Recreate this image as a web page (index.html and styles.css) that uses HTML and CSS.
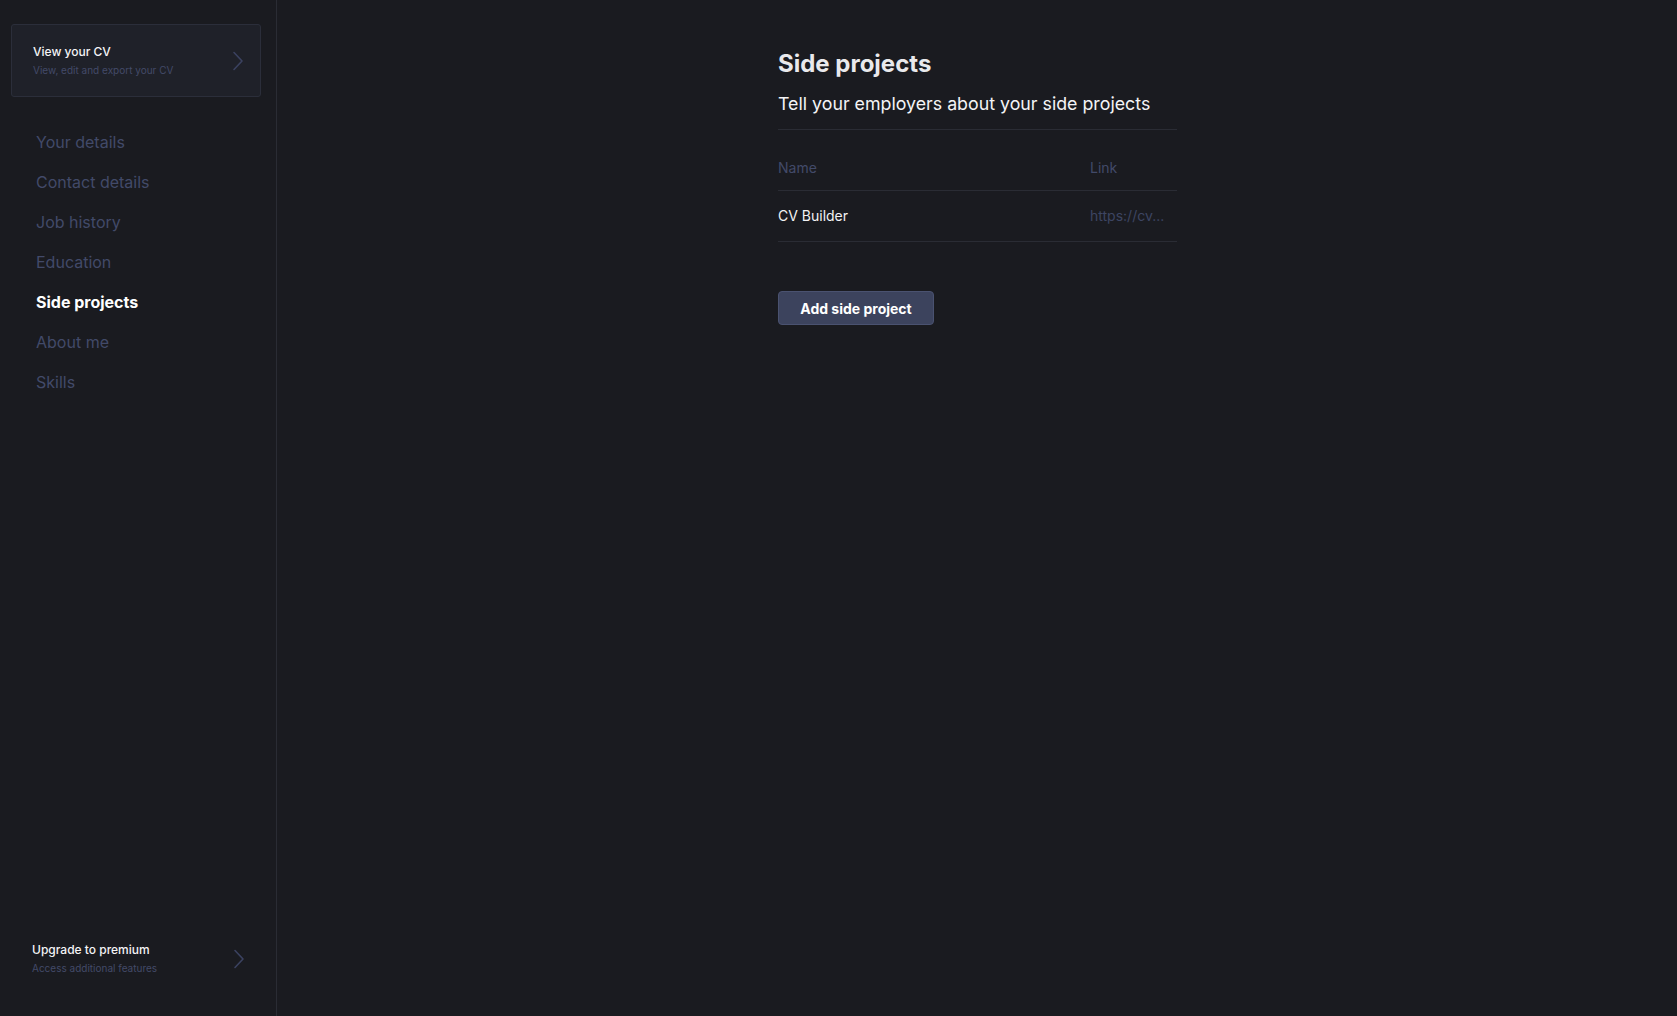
FILE: index.html
```html
<!DOCTYPE html>
<html lang="en">
<head>
<meta charset="utf-8">
<title>Side projects</title>
<link rel="stylesheet" href="styles.css">
</head>
<body>
<div class="app">
  <aside class="sidebar">
    <a class="cv-card" href="#">
      <div class="cv-text">
        <div class="cv-title">View your CV</div>
        <div class="cv-sub">View, edit and export your CV</div>
      </div>
      <svg class="chev" width="12" height="20" viewBox="0 0 12 20"><polyline points="2,1.5 10,10 2,18.5" fill="none" stroke="currentColor" stroke-width="1.6" stroke-linecap="round" stroke-linejoin="round"/></svg>
    </a>
    <nav class="nav">
      <a class="nav-item" href="#">Your details</a>
      <a class="nav-item" href="#">Contact details</a>
      <a class="nav-item" href="#">Job history</a>
      <a class="nav-item" href="#">Education</a>
      <a class="nav-item active" href="#">Side projects</a>
      <a class="nav-item" href="#">About me</a>
      <a class="nav-item" href="#">Skills</a>
    </nav>
    <a class="upgrade" href="#">
      <div class="cv-text">
        <div class="cv-title">Upgrade to premium</div>
        <div class="cv-sub">Access additional features</div>
      </div>
      <svg class="chev" width="12" height="20" viewBox="0 0 12 20"><polyline points="2,1.5 10,10 2,18.5" fill="none" stroke="currentColor" stroke-width="1.6" stroke-linecap="round" stroke-linejoin="round"/></svg>
    </a>
  </aside>
  <main class="main">
    <div class="content">
      <h1 class="title">Side projects</h1>
      <p class="subtitle">Tell your employers about your side projects</p>
      <table class="table">
        <thead>
          <tr><th class="col-name">Name</th><th class="col-link">Link</th></tr>
        </thead>
        <tbody>
          <tr><td class="col-name">CV Builder</td><td class="col-link">https://cv...</td></tr>
        </tbody>
      </table>
      <button class="btn" type="button">Add side project</button>
    </div>
  </main>
</div>
</body>
</html>
```

FILE: styles.css
```css
* { box-sizing: border-box; }
html, body { margin: 0; padding: 0; height: 100%; }
body {
  background: #1a1b20;
  font-family: Inter, "Noto Sans", sans-serif;
  color: #f2f2f4;
}
a { text-decoration: none; color: inherit; }

.app {
  display: flex;
  height: 100vh;
}

.sidebar {
  width: 277px;
  flex: none;
  border-right: 1px solid #2a2c34;
  padding: 24px 15px 0 11px;
  display: flex;
  flex-direction: column;
}

.cv-card {
  display: flex;
  align-items: center;
  justify-content: space-between;
  height: 73px;
  border: 1px solid #2b2e3a;
  border-radius: 3px;
  background: #1f2129;
  padding: 0 16px 0 21px;
}
.cv-text { display: flex; flex-direction: column; }
.cv-title {
  font-size: 12px;
  line-height: 16px;
  font-weight: 500;
  color: #f4f4f6;
}
.cv-sub {
  font-size: 10px;
  line-height: 14px;
  margin-top: 3px;
  color: #434a68;
}
.chev { color: #3b4260; }

.nav {
  display: flex;
  flex-direction: column;
  margin-top: 25px;
  padding-left: 25px;
}
.nav-item {
  font-size: 16px;
  line-height: 24px;
  padding: 8px 0;
  color: #424a69;
}
.nav-item.active {
  color: #ffffff;
  font-weight: 700;
}

.upgrade {
  margin-top: auto;
  margin-bottom: 41px;
  display: flex;
  align-items: center;
  justify-content: space-between;
  padding: 0 16px 0 21px;
}

.main {
  flex: 1;
  display: flex;
  justify-content: center;
}
.content {
  width: 400px;
  padding-top: 48px;
  padding-left: 1px;
}
.title {
  margin: 0;
  font-size: 24px;
  line-height: 32px;
  font-weight: 700;
  color: #e9e9ec;
}
.subtitle {
  margin: 10px 0 0;
  font-size: 17.8px;
  line-height: 28px;
  color: #f4f4f6;
  padding-bottom: 11px;
  border-bottom: 1px solid #2a2c34;
}

.table {
  width: 100%;
  border-collapse: collapse;
  margin-top: 15px;
  table-layout: fixed;
}
.table th, .table td {
  text-align: left;
  font-size: 14px;
  line-height: 20px;
  padding: 15px 0;
  border-bottom: 1px solid #2a2c34;
  white-space: nowrap;
}
.table th {
  font-weight: 400;
  color: #424a69;
  padding: 13px 0 12px;
}
.table td.col-name { color: #f2f2f4; }
.table td.col-link { color: #3d4562; }
.col-link { width: 87px; }

.btn {
  margin-top: 49px;
  height: 34px;
  width: 156px;
  font-family: inherit;
  font-size: 14px;
  font-weight: 700;
  color: #ffffff;
  background: #3c435d;
  border: 1px solid #4a5270;
  border-radius: 4px;
  cursor: pointer;
}
```
